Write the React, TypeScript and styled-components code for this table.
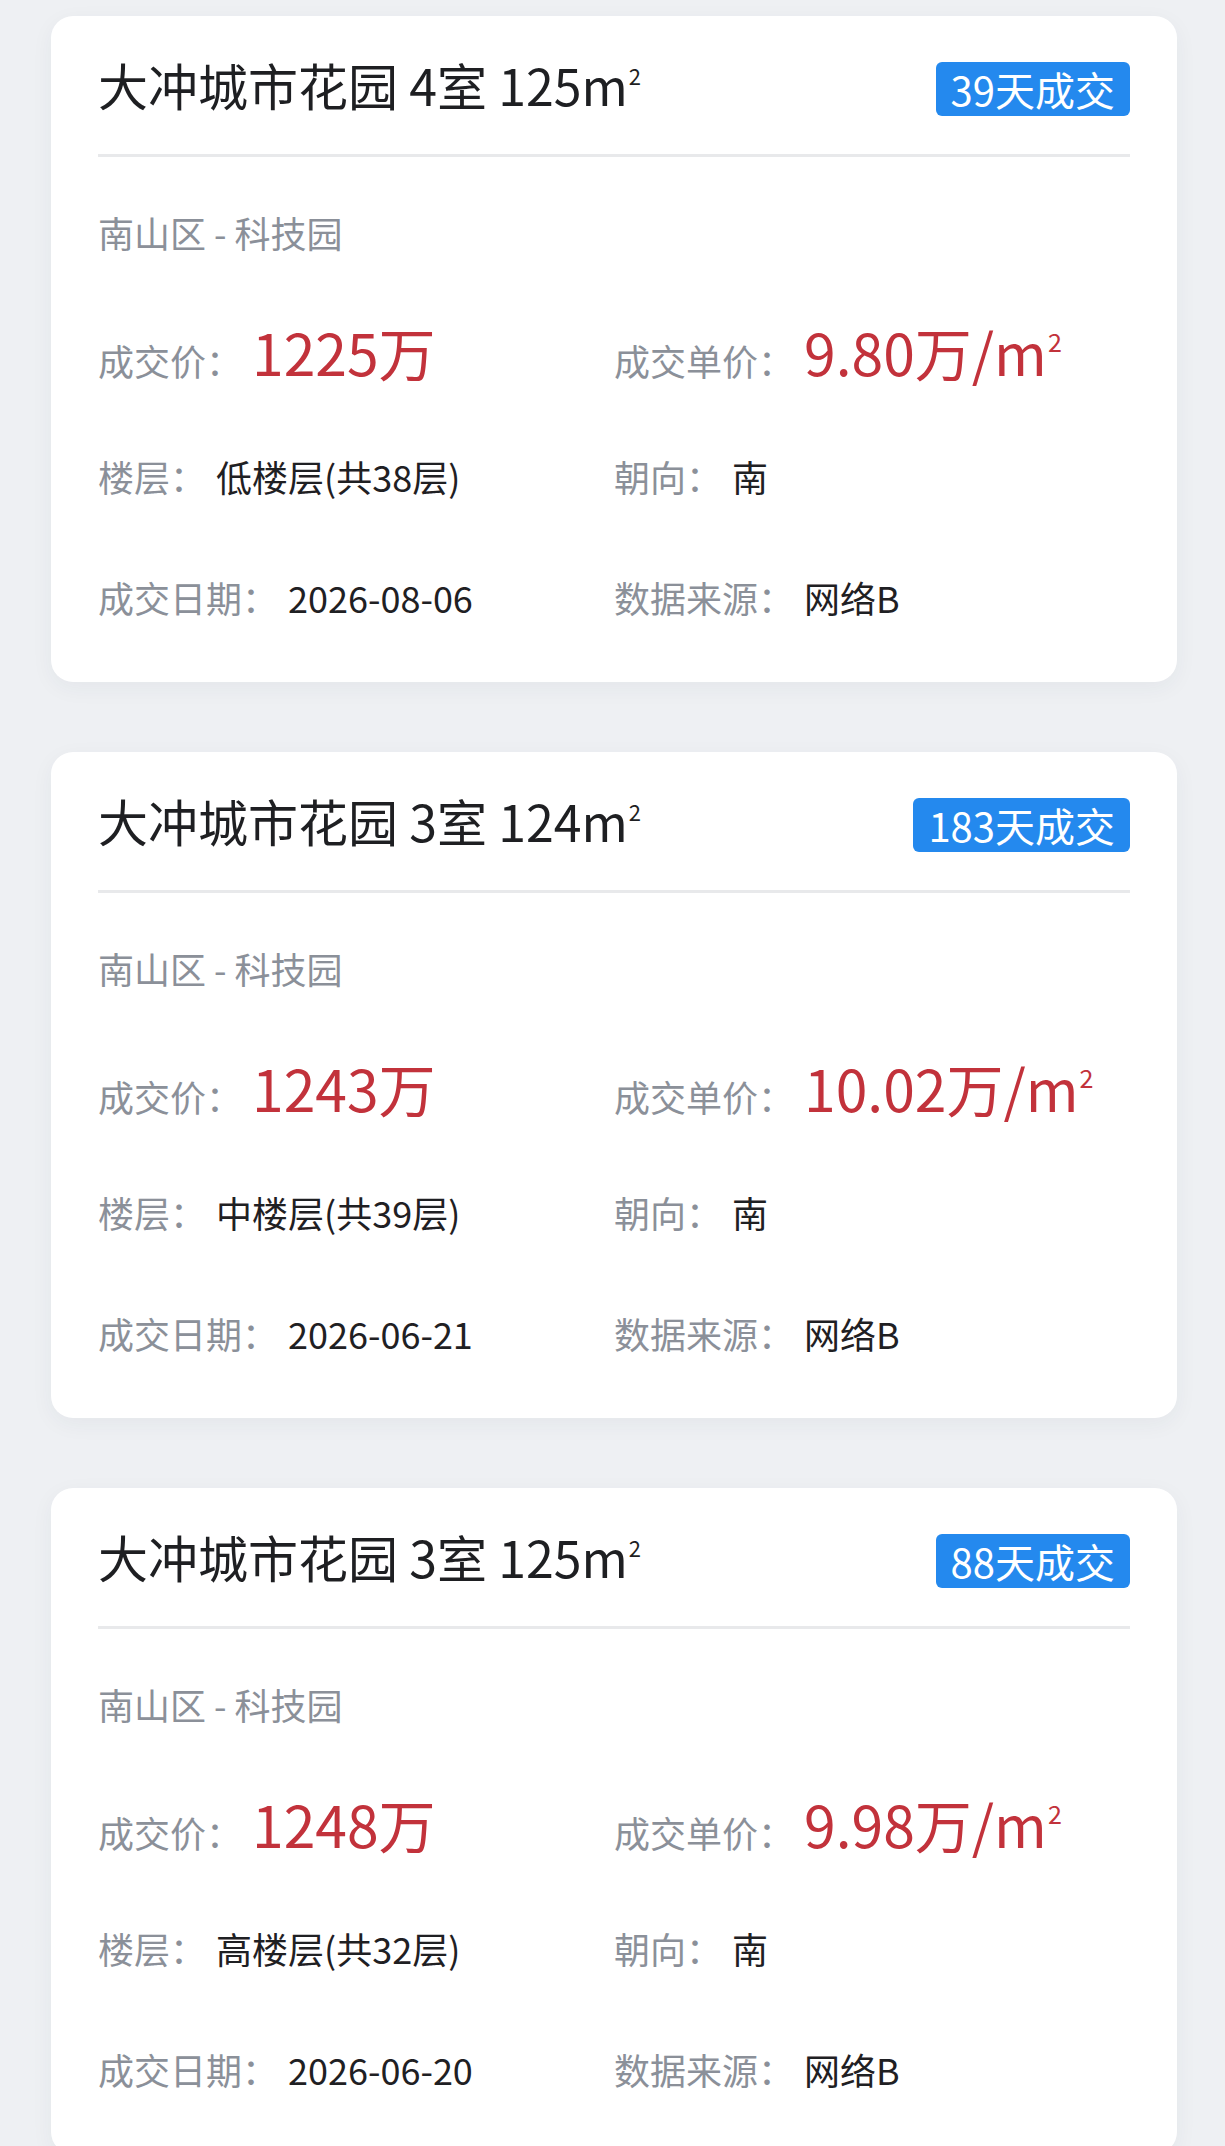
import React from "react";
import styled, { createGlobalStyle } from "styled-components";

const GlobalStyle = createGlobalStyle`
  html, body {
    margin: 0;
    padding: 0;
    background: #eef0f3;
  }
  body {
    font-family: "Noto Sans CJK SC", "Noto Sans", sans-serif;
    -webkit-font-smoothing: antialiased;
  }
  * { box-sizing: border-box; }
`;

const Page = styled.div`
  display: flex;
  flex-direction: column;
  gap: 70px;
  padding: 16px 48px 0 51px;
  min-height: 2146px;
  background: #eef0f3;
`;

const Card = styled.section`
  background: #ffffff;
  border-radius: 22px;
  padding: 0 47px 60px;
  box-shadow: 0 6px 22px rgba(40, 50, 70, 0.05);
`;

const Header = styled.div`
  display: flex;
  align-items: center;
  justify-content: space-between;
  height: 138px;
  padding-bottom: 3px;
`;

const Title = styled.h2`
  margin: 0;
  font-size: 50px;
  font-weight: 400;
  line-height: 70px;
  color: #1e1f22;
  white-space: nowrap;
`;

const Sup = styled.span`
  position: relative;
  top: -0.95em;
  font-size: 0.44em;
  line-height: 1;
  margin-left: 1px;
`;

const Badge = styled.span`
  margin-top: 10px;
  height: 54px;
  line-height: 54px;
  padding: 0 15px;
  border-radius: 6px;
  background: #2489ee;
  color: #ffffff;
  font-size: 40px;
  white-space: nowrap;
`;

const Divider = styled.div`
  height: 3px;
  background: #e8e9eb;
`;

const Location = styled.div`
  margin-top: 50px;
  font-size: 36px;
  line-height: 50px;
  color: #8b9099;
`;

const Row = styled.div<{ $lh: number; $mt: number }>`
  display: grid;
  grid-template-columns: 1fr 1fr;
  margin-top: ${(p) => p.$mt}px;
  line-height: ${(p) => p.$lh}px;
  white-space: nowrap;
`;

const Field = styled.div`
  font-size: 36px;
`;

const Label = styled.span`
  color: #8b9099;
  margin-right: 10px;
`;

const Value = styled.span<{ $price?: boolean }>`
  color: ${(p) => (p.$price ? "#c2323b" : "#1f2023")};
  font-size: ${(p) => (p.$price ? "57px" : "36px")};
`;

type Deal = {
  rooms: string;
  area: string;
  days: number;
  price: string;
  unit: string;
  floor: string;
  date: string;
};

const deals: Deal[] = [
  { rooms: "4室", area: "125", days: 39, price: "1225万", unit: "9.80万/m", floor: "低楼层(共38层)", date: "2026-08-06" },
  { rooms: "3室", area: "124", days: 183, price: "1243万", unit: "10.02万/m", floor: "中楼层(共39层)", date: "2026-06-21" },
  { rooms: "3室", area: "125", days: 88, price: "1248万", unit: "9.98万/m", floor: "高楼层(共32层)", date: "2026-06-20" },
];

const DealCard: React.FC<{ d: Deal }> = ({ d }) => (
  <Card>
    <Header>
      <Title>
        大冲城市花园 {d.rooms} {d.area}m<Sup>2</Sup>
      </Title>
      <Badge>{d.days}天成交</Badge>
    </Header>
    <Divider />
    <Location>南山区 - 科技园</Location>
    <Row $lh={80} $mt={54}>
      <Field>
        <Label>成交价：</Label>
        <Value $price>{d.price}</Value>
      </Field>
      <Field>
        <Label>成交单价：</Label>
        <Value $price>
          {d.unit}
          <Sup>2</Sup>
        </Value>
      </Field>
    </Row>
    <Row $lh={50} $mt={51}>
      <Field>
        <Label>楼层：</Label>
        <Value>{d.floor}</Value>
      </Field>
      <Field>
        <Label>朝向：</Label>
        <Value>南</Value>
      </Field>
    </Row>
    <Row $lh={50} $mt={71}>
      <Field>
        <Label>成交日期：</Label>
        <Value>{d.date}</Value>
      </Field>
      <Field>
        <Label>数据来源：</Label>
        <Value>网络B</Value>
      </Field>
    </Row>
  </Card>
);

export default function App() {
  return (
    <>
      <GlobalStyle />
      <Page>
        {deals.map((d, i) => (
          <DealCard key={i} d={d} />
        ))}
      </Page>
    </>
  );
}
